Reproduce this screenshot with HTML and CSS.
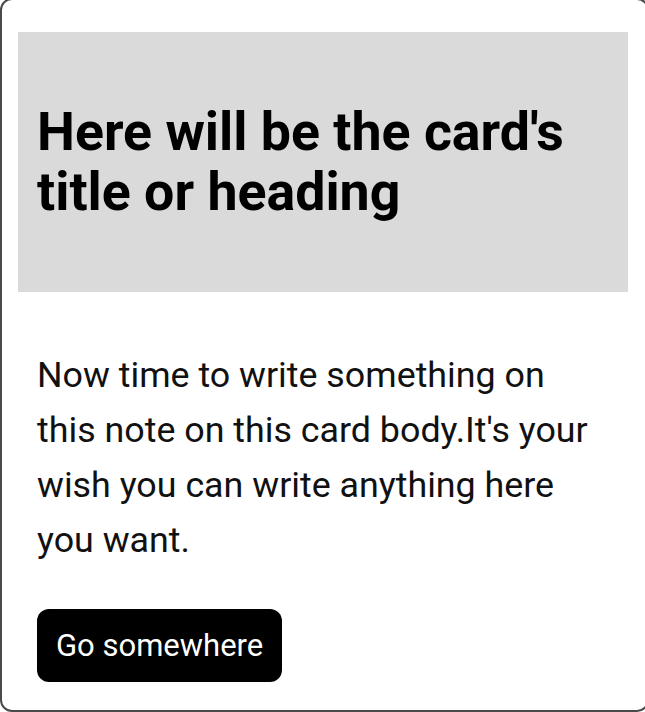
FILE: index.html
```html
<!DOCTYPE html>
<html lang="en">
<head>
<meta charset="utf-8">
<title>Card</title>
<link rel="stylesheet" href="styles.css">
</head>
<body>
<div class="card">
  <div class="card-header">
    <h1 class="card-title">Here will be the card's title or heading</h1>
  </div>
  <div class="card-body">
    <p class="card-text">Now time to write something on this note on this card body.It's your wish you can write anything here you want.</p>
    <a class="btn" href="#">Go somewhere</a>
  </div>
</div>
</body>
</html>
```
FILE: styles.css
```css
html, body {
  margin: 0;
  padding: 0;
  overflow: hidden;
  background: #fff;
}
body {
  font-family: Roboto, "Liberation Sans", sans-serif;
  color: #000;
}
.card {
  box-sizing: border-box;
  width: 649px;
  height: 714px;
  margin-top: -2px;
  border: 2px solid #4a4a4a;
  border-radius: 12px;
  padding: 32px 19px 28px 16px;
  display: flex;
  flex-direction: column;
}
.card-header {
  background: #dadada;
  height: 260px;
  padding: 0 19px;
  display: flex;
  align-items: center;
  box-sizing: border-box;
}
.card-title {
  margin: 0;
  font-size: 53.7px;
  line-height: 60px;
  font-weight: 700;
  color: #000;
}
.card-body {
  padding: 0 19px;
  flex: 1;
  display: flex;
  flex-direction: column;
  align-items: flex-start;
}
.card-text {
  margin: 56px 0 0;
  max-width: 566px;
  font-size: 35.8px;
  line-height: 55px;
  color: #111;
}
.btn {
  margin-top: auto;
  display: inline-block;
  background: #000;
  color: #fff;
  text-decoration: none;
  font-size: 31px;
  line-height: 73px;
  height: 73px;
  padding: 0 19px;
  border-radius: 12px;
}
```
